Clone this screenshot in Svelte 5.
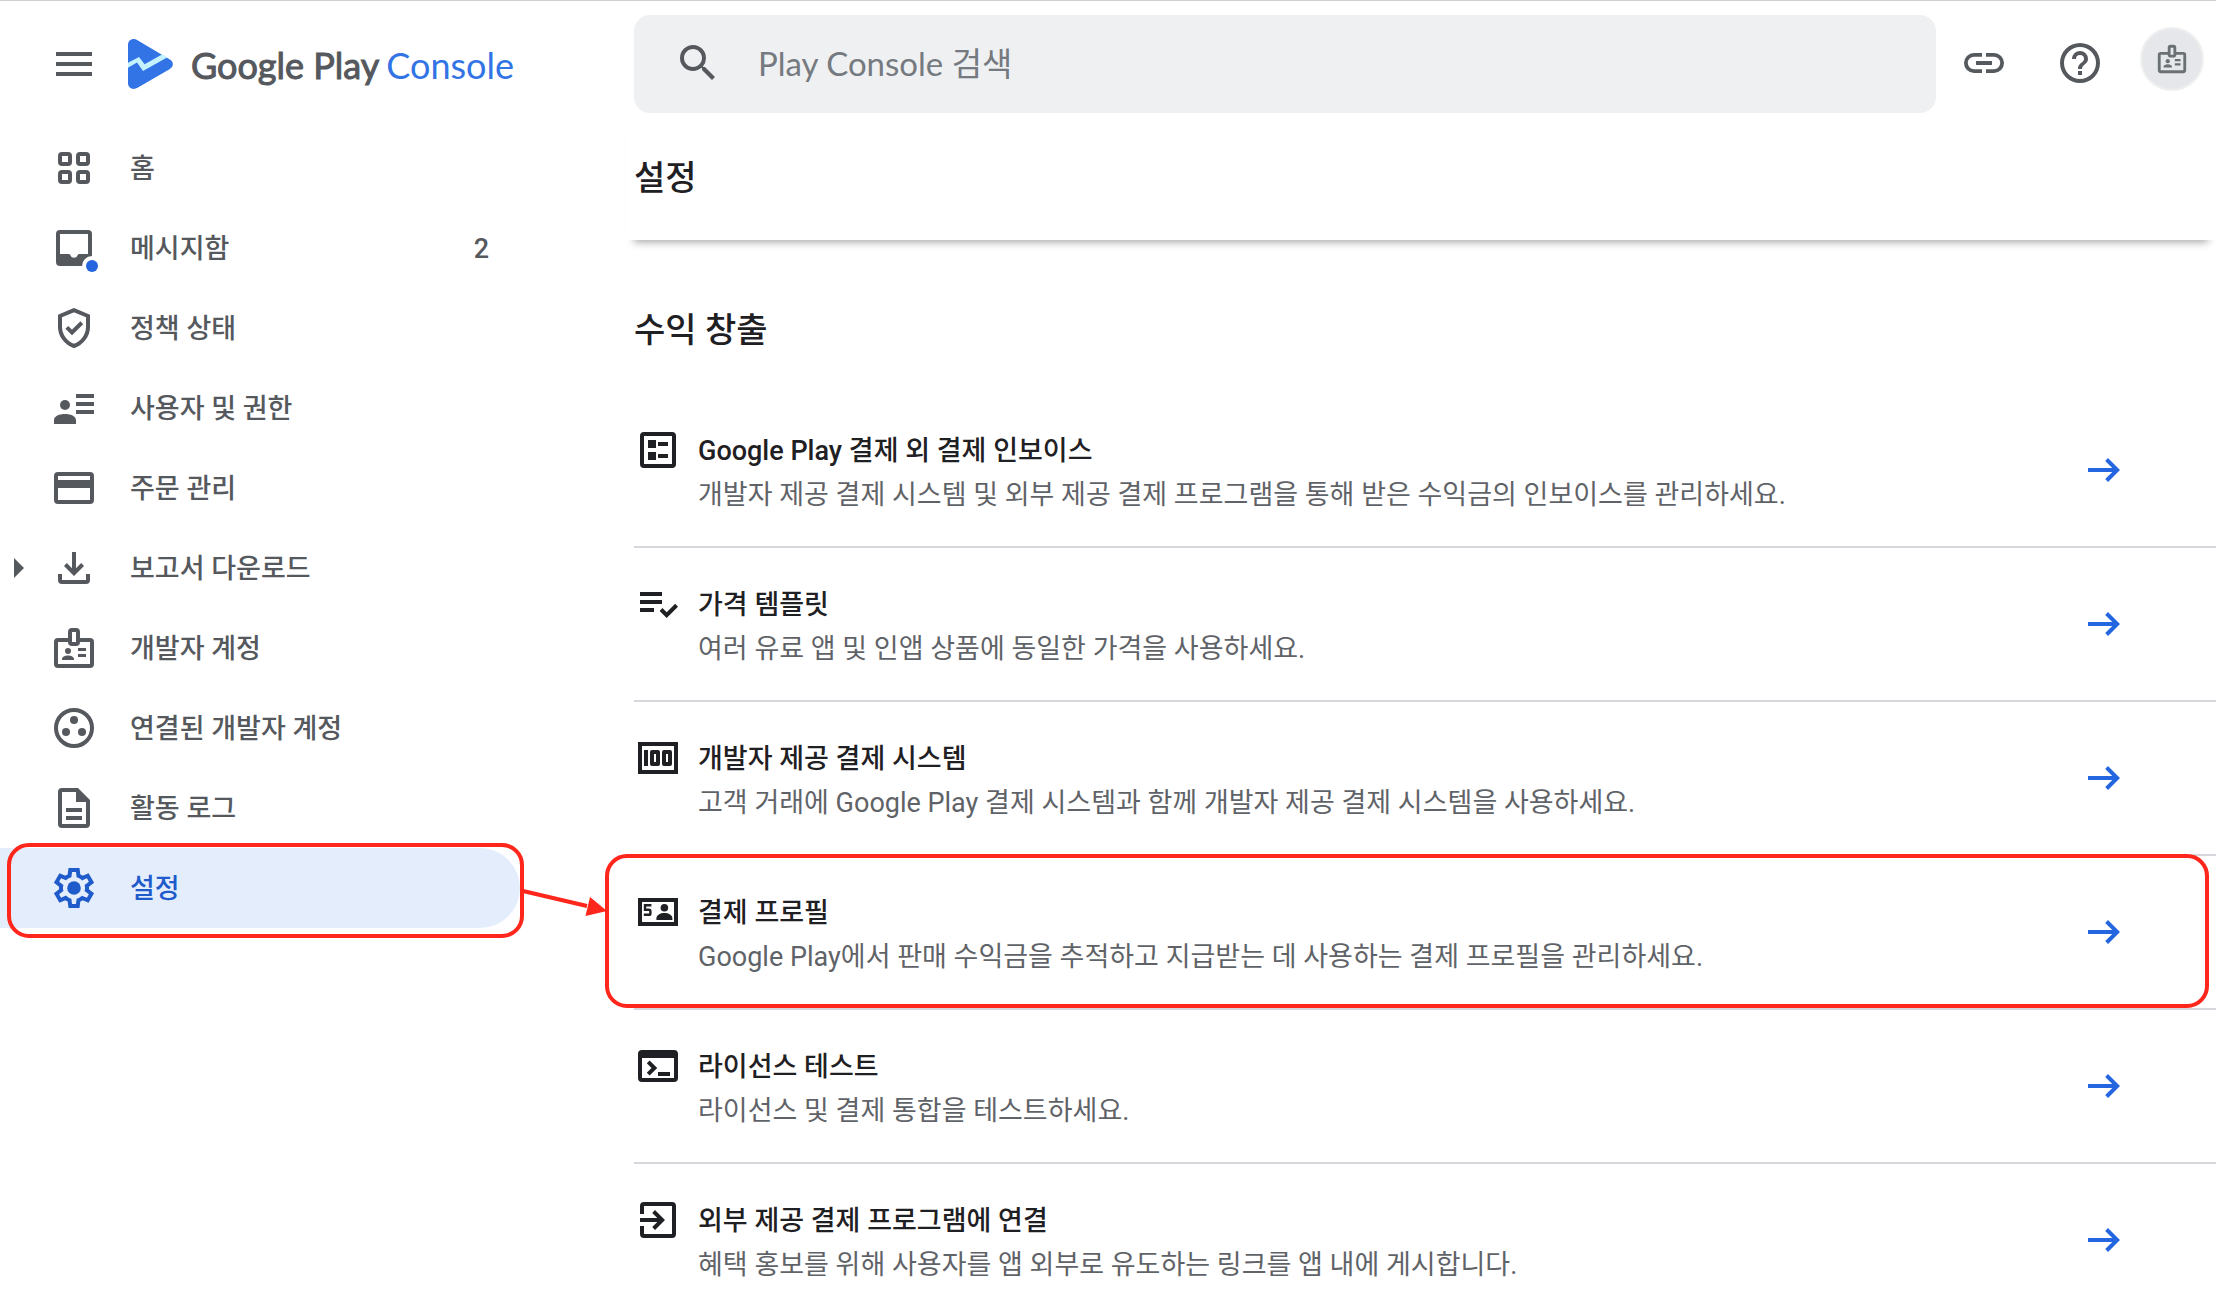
<script>
  const navItems = [
    { id: 'home', label: '홈' },
    { id: 'inbox', label: '메시지함', count: 2 },
    { id: 'policy', label: '정책 상태' },
    { id: 'users', label: '사용자 및 권한' },
    { id: 'orders', label: '주문 관리' },
    { id: 'download', label: '보고서 다운로드', expandable: true },
    { id: 'badge', label: '개발자 계정' },
    { id: 'linked', label: '연결된 개발자 계정' },
    { id: 'log', label: '활동 로그' },
    { id: 'settings', label: '설정', selected: true }
  ];

  const settings = [
    {
      id: 'ballot',
      title: 'Google Play 결제 외 결제 인보이스',
      text: '개발자 제공 결제 시스템 및 외부 제공 결제 프로그램을 통해 받은 수익금의 인보이스를 관리하세요.'
    },
    {
      id: 'template',
      title: '가격 템플릿',
      text: '여러 유료 앱 및 인앱 상품에 동일한 가격을 사용하세요.'
    },
    {
      id: 'money',
      title: '개발자 제공 결제 시스템',
      text: '고객 거래에 Google Play 결제 시스템과 함께 개발자 제공 결제 시스템을 사용하세요.'
    },
    {
      id: 'profile',
      title: '결제 프로필',
      text: 'Google Play에서 판매 수익금을 추적하고 지급받는 데 사용하는 결제 프로필을 관리하세요.',
      marked: true
    },
    {
      id: 'terminal',
      title: '라이선스 테스트',
      text: '라이선스 및 결제 통합을 테스트하세요.'
    },
    {
      id: 'enter',
      title: '외부 제공 결제 프로그램에 연결',
      text: '혜택 홍보를 위해 사용자를 앱 외부로 유도하는 링크를 앱 내에 게시합니다.'
    }
  ];
</script>

{#snippet icon(id)}
  <svg class="icon" viewBox="0 0 24 24" aria-hidden="true">
    {#if id === 'menu'}
      <path d="M3 6h18v2H3zM3 11h18v2H3zM3 16h18v2H3z" />
    {:else if id === 'home'}
      <g class="line">
        <rect x="5" y="5" width="5" height="5" rx="1" />
        <rect x="14" y="5" width="5" height="5" rx="1" />
        <rect x="5" y="14" width="5" height="5" rx="1" />
        <rect x="14" y="14" width="5" height="5" rx="1" />
      </g>
    {:else if id === 'inbox'}
      <path fill-rule="evenodd" d="M5 3h14a2 2 0 0 1 2 2v14a2 2 0 0 1-2 2H5a2 2 0 0 1-2-2V5a2 2 0 0 1 2-2zM5 5v10h4.4q.6 0 .8.6a1.9 1.9 0 0 0 3.6 0q.2-.6.8-.6H19V5z" />
      <circle class="halo" cx="21" cy="21" r="5" />
      <circle class="dot" cx="21" cy="21" r="3" />
    {:else if id === 'policy'}
      <path class="line" d="M12 3.1 5 6v5.5c0 4.2 3 8.2 7 9.5 4-1.3 7-5.3 7-9.5V6z" />
      <path class="line" d="M8.4 11.7 11 14.2l4.900-4.800" />
    {:else if id === 'users'}
      <path d="M13 5h9v2h-9zM13 9h9v2h-9zM13 13h9v2h-9zM2 20v-1.9C2 16 4.700 15 7.500 15S13 16 13 18.100V20z" />
      <circle cx="7.5" cy="10.5" r="2.5" />
    {:else if id === 'orders'}
      <path fill-rule="evenodd" d="M4 4h16a2 2 0 0 1 2 2v12a2 2 0 0 1-2 2H4a2 2 0 0 1-2-2V6a2 2 0 0 1 2-2zM4 6v2h16V6zM4 12v6h16v-6z" />
    {:else if id === 'download'}
      <path d="m12 16-5-5 1.400-1.450 2.600 2.600V4h2v8.150l2.600-2.600L17 11zM6 20a2 2 0 0 1-2-2v-3h2v3h12v-3h2v3a2 2 0 0 1-2 2z" />
    {:else if id === 'badge'}
      <path class="line" d="M9.500 8H4a1 1 0 0 0-1 1v11a1 1 0 0 0 1 1h16a1 1 0 0 0 1-1V9a1 1 0 0 0-1-1h-5.500" />
      <rect class="line" x="10" y="3" width="4" height="7" rx="1" />
      <circle cx="9" cy="13.5" r="1.5" />
      <path d="M6 18v-.5c0-1.200 1.500-1.800 3-1.800s3 .6 3 1.800v.5zM14 12h4v1.500h-4zM14 15h4v1.500h-4z" />
    {:else if id === 'linked'}
      <circle class="line" cx="12" cy="12" r="9" />
      <circle cx="12" cy="8" r="2" />
      <circle cx="8" cy="14" r="2" />
      <circle cx="16" cy="14" r="2" />
    {:else if id === 'log'}
      <path fill-rule="evenodd" d="M8 16h8v2H8zM8 12h8v2H8zM14 2H6a2 2 0 0 0-2 2v16a2 2 0 0 0 2 2h12a2 2 0 0 0 2-2V8zM6 20V4h7v5h5v11z" />
    {:else if id === 'settings'}
      <path fill-rule="evenodd" d="m9.250 22-.4-3.200q-.325-.125-.612-.3-.288-.175-.563-.375L4.700 19.375l-2.750-4.750 2.575-1.950Q4.500 12.500 4.500 12.337v-.675q0-.162.025-.337L1.950 9.375l2.750-4.750 2.975 1.250q.275-.2.575-.375.3-.175.6-.3l.4-3.200h5.500l.4 3.200q.325.125.613.3.287.175.562.375l2.975-1.250 2.750 4.750-2.575 1.950q.025.175.025.338v.674q0 .163-.05.338l2.575 1.950-2.750 4.750-2.950-1.250q-.275.2-.575.375-.3.175-.6.3l-.4 3.200zm1.750-2h1.975l.35-2.650q.775-.2 1.438-.588.662-.387 1.212-.937l2.475 1.025.975-1.700-2.150-1.625q.125-.35.175-.737.05-.388.05-.788t-.05-.788q-.05-.387-.175-.737l2.150-1.625-.975-1.700-2.475 1.050q-.55-.575-1.212-.963-.663-.387-1.438-.587L13 4h-1.975l-.35 2.650q-.775.2-1.437.587-.663.388-1.213.938L5.550 7.150l-.975 1.700 2.150 1.600q-.125.375-.175.750-.05.375-.05.8 0 .4.05.775t.175.750l-2.150 1.625.975 1.700 2.475-1.050q.55.575 1.213.962.662.388 1.437.588z" />
      <circle cx="12" cy="12" r="3.400" />
    {:else if id === 'search'}
      <path d="M15.500 14h-.79l-.28-.27A6.470 6.470 0 0 0 16 9.500 6.500 6.500 0 1 0 9.500 16c1.610 0 3.090-.59 4.230-1.570l.27.28v.79l5 4.990L20.490 19zm-6 0C7.010 14 5 11.990 5 9.500S7.010 5 9.500 5 14 7.010 14 9.500 11.990 14 9.500 14z" />
    {:else if id === 'link'}
      <path d="M3.900 12A3.100 3.100 0 0 1 7 8.900h4V7H7a5 5 0 0 0 0 10h4v-1.900H7A3.100 3.100 0 0 1 3.900 12zM8 13h8v-2H8zM17 7h-4v1.900h4a3.100 3.100 0 0 1 0 6.200h-4V17h4a5 5 0 0 0 0-10z" />
    {:else if id === 'help'}
      <path d="M11 18h2v-2h-2zM12 2a10 10 0 1 0 0 20 10 10 0 0 0 0-20zm0 18a8 8 0 1 1 0-16 8 8 0 0 1 0 16zm0-14a4 4 0 0 0-4 4h2a2 2 0 1 1 4 0c0 2-3 1.750-3 5h2c0-2.250 3-2.500 3-5a4 4 0 0 0-4-4z" />
    {:else if id === 'ballot'}
      <rect class="line" x="4" y="4" width="16" height="16" rx="1" />
      <path d="M7 7h4v4H7zM7 13h4v4H7zM12 8h5v2h-5zM12 14h5v2h-5z" />
    {:else if id === 'template'}
      <path d="M3 10h11v2H3zM3 6h11v2H3zM3 14h7v2H3zM20.590 11.930l-4.250 4.240-2.120-2.120-1.410 1.410L16.340 19 22 13.340z" />
    {:else if id === 'money'}
      <path fill-rule="evenodd" d="M2 4h20v16H2zM4 6v12h16V6zM5 8h2v8H5zM9 8h3a1 1 0 0 1 1 1v6a1 1 0 0 1-1 1H9a1 1 0 0 1-1-1V9a1 1 0 0 1 1-1zm1 2v4h1v-4zM15 8h3a1 1 0 0 1 1 1v6a1 1 0 0 1-1 1h-3a1 1 0 0 1-1-1V9a1 1 0 0 1 1-1zm1 2v4h1v-4z" />
    {:else if id === 'profile'}
      <path fill-rule="evenodd" d="M2 5h20v14H2zM4 7v10h16V7z" />
      <path class="thin" d="M8.700 8.600H5.500v2.300H7.500q.7 0 .7.700v1.100q0 .7-.7.700H4.900" />
      <circle cx="15.200" cy="9.900" r="1.900" />
      <path d="M11.200 16v-.8c0-1.700 2-2.700 4-2.700s4 1 4 2.700v.8z" />
    {:else if id === 'terminal'}
      <path fill-rule="evenodd" d="M4 4h16a2 2 0 0 1 2 2v12a2 2 0 0 1-2 2H4a2 2 0 0 1-2-2V6a2 2 0 0 1 2-2zM4 8v10h16V8zM12 15h6v2h-6z" />
      <path class="line" d="M7.100 9.900 10.200 13l-3.100 3.100" />
    {:else if id === 'enter'}
      <path d="m10.500 17-1.400-1.450L11.670 13H3v-2h8.670L9.100 8.450 10.500 7l5 5z" />
      <path d="M5 3h14a2 2 0 0 1 2 2v14a2 2 0 0 1-2 2H5a2 2 0 0 1-2-2v-4h2v4h14V5H5v4H3V5a2 2 0 0 1 2-2z" />
    {:else if id === 'go'}
      <path d="m14 18-1.400-1.450L16.150 13H4v-2h12.150L12.600 7.450 14 6l6 6z" />
    {/if}
  </svg>
{/snippet}

<div class="page">
  <aside>
    <div class="brand">
      <button class="plain" aria-label="메뉴">{@render icon('menu')}</button>
      <a class="logo" href="#home">
        <svg class="mark" viewBox="0 0 45 50" aria-hidden="true">
          <path class="mark-body" d="M0 6C0 1 5 -1.500 9.500 1.200L41.500 20.300C46 23 46 27.500 41.500 30.200L9.500 48.800C5 51.500 0 49 0 44z" />
          <path class="mark-line" d="M0 23.700 11 18l5.600 7.300L34.500 15.300l5 3L15 32l-6-8.500-9 5.200z" />
        </svg>
        <span class="wordmark"><b>Google Play</b> <span>Console</span></span>
      </a>
    </div>
    <nav>
      {#each navItems as item (item.id)}
        <a class="nav-item" class:selected={item.selected} href={'#' + item.id}>
          <span class="caret" class:shown={item.expandable}></span>
          {@render icon(item.id)}
          <span class="label">{item.label}</span>
          {#if item.count}<span class="count">{item.count}</span>{/if}
          {#if item.selected}
            <svg class="pointer" viewBox="0 0 84 30" aria-hidden="true">
              <path d="M0 6 64 21" />
              <polygon points="84,26 62.500,31 67,12" />
            </svg>
          {/if}
        </a>
      {/each}
    </nav>
  </aside>

  <div class="content">
    <header>
      <label class="search">
        {@render icon('search')}
        <input type="search" placeholder="Play Console 검색" aria-label="Play Console 검색" />
      </label>
      <div class="actions">
        <button class="plain" aria-label="링크 복사">{@render icon('link')}</button>
        <button class="plain" aria-label="도움말">{@render icon('help')}</button>
        <button class="avatar" aria-label="개발자 계정">{@render icon('badge')}</button>
      </div>
    </header>
    <div class="title-bar"><h1>설정</h1></div>
    <main>
      <h2>수익 창출</h2>
      <ul>
        {#each settings as row (row.id)}
          <li class:marked={row.marked}>
            <a class="row" href={'#' + row.id}>
              {@render icon(row.id)}
              <span class="copy">
                <strong>{row.title}</strong>
                <span>{row.text}</span>
              </span>
              <span class="go">{@render icon('go')}</span>
            </a>
          </li>
        {/each}
      </ul>
    </main>
  </div>
</div>

<style>
  :global(body) {
    background: #fff;
  }
  .page {
    box-sizing: border-box;
    display: flex;
    min-height: 100vh;
    overflow: hidden;
    border-top: 1px solid #d0d0d1;
    font-family: Roboto, 'Noto Sans CJK KR', sans-serif;
    font-size: 27px;
    color: #55585d;
  }
  a {
    color: inherit;
    text-decoration: none;
  }
  button {
    display: flex;
    align-items: center;
    justify-content: center;
    padding: 0;
    border: 0;
    background: none;
    color: inherit;
    cursor: pointer;
  }
  .icon {
    flex: none;
    width: 48px;
    height: 48px;
    fill: currentColor;
    overflow: visible;
  }
  .line {
    fill: none;
    stroke: currentColor;
    stroke-width: 2;
  }
  .thin {
    fill: none;
    stroke: currentColor;
    stroke-width: 1.2;
  }
  .halo {
    fill: #fff;
  }
  .dot {
    fill: #2466e0;
  }

  aside {
    flex: none;
    width: 626px;
  }
  .brand {
    display: flex;
    align-items: center;
    height: 127px;
    padding: 0 0 2px 50px;
    box-sizing: border-box;
  }
  .logo {
    display: flex;
    align-items: center;
    gap: 18px;
    margin-left: 30px;
  }
  .mark {
    width: 45px;
    height: 50px;
  }
  .mark-body {
    fill: #3274e5;
  }
  .mark-line {
    fill: #c5f2ff;
  }
  .wordmark {
    display: flex;
    gap: 7px;
    padding-top: 2px;
    font-family: Lato, sans-serif;
    font-size: 36px;
    line-height: 48px;
    white-space: nowrap;
  }
  .wordmark b {
    font-weight: 400;
    -webkit-text-stroke: 1px currentColor;
  }
  .wordmark span {
    color: #3274e5;
  }

  .nav-item {
    position: relative;
    display: flex;
    align-items: center;
    box-sizing: border-box;
    width: 520px;
    height: 80px;
    padding-right: 31px;
    font-weight: 500;
  }
  .caret {
    box-sizing: border-box;
    width: 36px;
    height: 20px;
    margin-left: 14px;
  }
  .caret.shown::before {
    content: '';
    display: block;
    width: 10px;
    height: 20px;
    background: #55585d;
    clip-path: polygon(0 0, 100% 50%, 0 100%);
  }
  .label,
  .count {
    padding-top: 2px;
    line-height: 40px;
  }
  .label {
    flex: 1;
    margin-left: 32px;
  }
  .selected {
    border-radius: 0 40px 40px 0;
    background: #e4edfc;
    color: #205bcb;
  }
  .selected::after {
    content: '';
    position: absolute;
    inset: -5px -4px -10px 7px;
    border: 4px solid #ff261b;
    border-radius: 22px;
  }
  .pointer {
    position: absolute;
    left: 523px;
    top: 37px;
    z-index: 2;
    width: 84px;
    height: 30px;
    overflow: visible;
    fill: #ff261b;
  }
  .pointer path {
    stroke: #ff261b;
    stroke-width: 4;
  }

  .content {
    flex: 1;
    min-width: 0;
  }
  header {
    display: flex;
    align-items: flex-start;
    gap: 24px;
    padding: 14px 12px 0 8px;
  }
  .search {
    flex: 1;
    display: flex;
    align-items: center;
    gap: 36px;
    height: 98px;
    padding: 0 40px 2px;
    box-sizing: border-box;
    border-radius: 16px;
    background: #eff0f2;
  }
  .search input {
    flex: 1;
    min-width: 0;
    padding: 0;
    border: 0;
    outline: 0;
    background: none;
    color: #202124;
    font-family: Lato, 'Noto Sans CJK KR', sans-serif;
    font-size: 33px;
    line-height: 48px;
  }
  .search input::placeholder {
    color: #757a80;
    opacity: 1;
  }
  .actions {
    display: flex;
    align-items: center;
    gap: 48px;
    height: 96px;
  }
  .actions .avatar {
    width: 64px;
    height: 64px;
    margin: 0 0 8px -12px;
    border: 2px solid #eff0f0;
    border-radius: 50%;
    background: #e5e7ea;
    color: #6a7073;
  }
  .avatar .icon,
  .avatar :global(.icon) {
    width: 34px;
    height: 34px;
  }
  .title-bar {
    display: flex;
    align-items: center;
    box-sizing: border-box;
    height: 127px;
    padding: 2px 0 0 8px;
    box-shadow: 0 10px 8px -8px rgba(0, 0, 0, 0.36);
  }
  h1,
  h2 {
    margin: 0;
    color: #1f2023;
    font-size: 34px;
    font-weight: 500;
    line-height: 48px;
  }
  main {
    padding: 66px 0 0 8px;
  }
  ul {
    margin: 40px 0 0;
    padding: 0;
    list-style: none;
  }
  li {
    position: relative;
    border-bottom: 2px solid #d6d7dc;
  }
  li:last-child {
    border-bottom: 0;
  }
  .row {
    display: flex;
    gap: 16px;
    padding: 32px 88px 28px 0;
    color: #1f2023;
  }
  li:last-child .row {
    padding-bottom: 16px;
  }
  .copy {
    flex: 1;
    display: flex;
    flex-direction: column;
    padding: 3px 0 1px;
    line-height: 44px;
  }
  .copy strong {
    font-weight: 500;
  }
  .copy span {
    color: #5f6368;
  }
  .go {
    display: flex;
    padding-top: 20px;
    color: #2466e0;
  }
  .marked::after {
    content: '';
    position: absolute;
    inset: -2px 7px 0 -29px;
    border: 4px solid #ff261b;
    border-radius: 22px;
    pointer-events: none;
  }
</style>
